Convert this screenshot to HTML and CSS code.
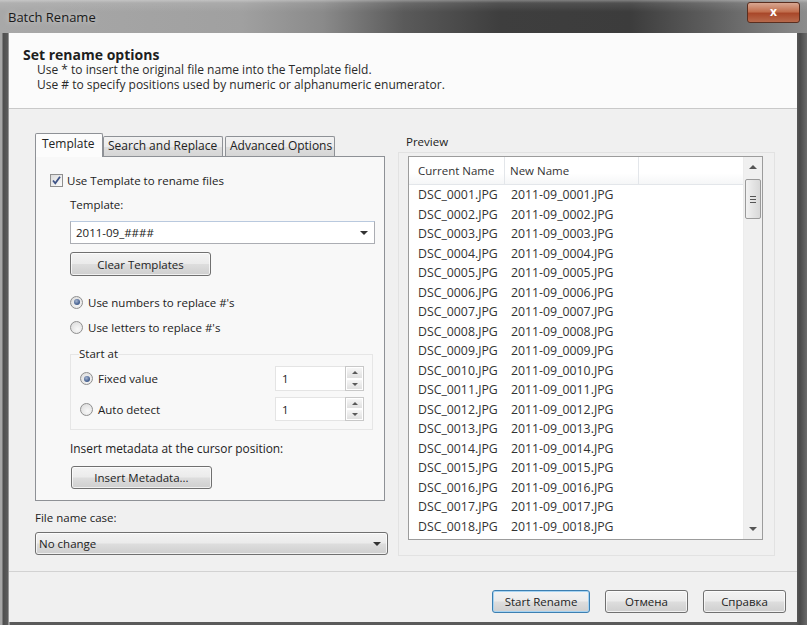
FILE: index.html
```html
<!DOCTYPE html>
<html>
<head>
<meta charset="utf-8">
<title>Batch Rename</title>
<link rel="stylesheet" href="styles.css">
</head>
<body>
<div class="window">
  <div class="titlebar">
    <span class="title">Batch Rename</span>
    <div class="close">x</div>
  </div>
  <div class="client">
    <div class="header">
      <div class="h-title">Set rename options</div>
      <div class="h-line">Use * to insert the original file name into the Template field.</div>
      <div class="h-line">Use # to specify positions used by numeric or alphanumeric enumerator.</div>
    </div>
    <div class="body">
      <div class="left">
        <div class="tabs">
          <div class="tab active">Template</div>
          <div class="tab">Search and Replace</div>
          <div class="tab">Advanced Options</div>
        </div>
        <div class="panel">
          <div class="check-row">
            <span class="checkbox"><svg viewBox="0 0 11 11" width="11" height="11"><path d="M2 5.5 L4.3 8.3 L9 1.8" fill="none" stroke="#3d5286" stroke-width="1.8"/></svg></span>
            <span>Use Template to rename files</span>
          </div>
          <div class="indent">
            <div class="label lbl-template">Template:</div>
            <div class="combo-edit"><span>2011-09_####</span><span class="arrow"></span></div>
            <div class="btn btn-clear">Clear Templates</div>
            <div class="radio-row r1"><span class="radio checked"></span><span>Use numbers to replace #'s</span></div>
            <div class="radio-row r2"><span class="radio"></span><span>Use letters to replace #'s</span></div>
            <fieldset class="startat">
              <legend>Start at</legend>
              <div class="spin-row">
                <div class="radio-row"><span class="radio checked"></span><span>Fixed value</span></div>
                <div class="spin"><div class="spin-input">1</div><div class="spin-btns"><span class="up"></span><span class="down"></span></div></div>
              </div>
              <div class="spin-row second">
                <div class="radio-row"><span class="radio"></span><span>Auto detect</span></div>
                <div class="spin"><div class="spin-input">1</div><div class="spin-btns"><span class="up"></span><span class="down"></span></div></div>
              </div>
            </fieldset>
            <div class="label lbl-insert">Insert metadata at the cursor position:</div>
            <div class="btn btn-insert">Insert Metadata...</div>
          </div>
        </div>
        <div class="label lbl-case">File name case:</div>
        <div class="combo-drop"><span>No change</span><span class="arrow"></span></div>
      </div>
      <div class="preview">
        <div class="label lbl-preview">Preview</div>
        <div class="group">
          <div class="listview">
            <div class="lv-main">
              <div class="lv-header">
                <div class="col c1">Current Name</div>
                <div class="col c2">New Name</div>
                <div class="col c3"></div>
              </div>
              <div class="lv-rows">
                <div class="lv-row"><span>DSC_0001.JPG</span><span>2011-09_0001.JPG</span></div>
                <div class="lv-row"><span>DSC_0002.JPG</span><span>2011-09_0002.JPG</span></div>
                <div class="lv-row"><span>DSC_0003.JPG</span><span>2011-09_0003.JPG</span></div>
                <div class="lv-row"><span>DSC_0004.JPG</span><span>2011-09_0004.JPG</span></div>
                <div class="lv-row"><span>DSC_0005.JPG</span><span>2011-09_0005.JPG</span></div>
                <div class="lv-row"><span>DSC_0006.JPG</span><span>2011-09_0006.JPG</span></div>
                <div class="lv-row"><span>DSC_0007.JPG</span><span>2011-09_0007.JPG</span></div>
                <div class="lv-row"><span>DSC_0008.JPG</span><span>2011-09_0008.JPG</span></div>
                <div class="lv-row"><span>DSC_0009.JPG</span><span>2011-09_0009.JPG</span></div>
                <div class="lv-row"><span>DSC_0010.JPG</span><span>2011-09_0010.JPG</span></div>
                <div class="lv-row"><span>DSC_0011.JPG</span><span>2011-09_0011.JPG</span></div>
                <div class="lv-row"><span>DSC_0012.JPG</span><span>2011-09_0012.JPG</span></div>
                <div class="lv-row"><span>DSC_0013.JPG</span><span>2011-09_0013.JPG</span></div>
                <div class="lv-row"><span>DSC_0014.JPG</span><span>2011-09_0014.JPG</span></div>
                <div class="lv-row"><span>DSC_0015.JPG</span><span>2011-09_0015.JPG</span></div>
                <div class="lv-row"><span>DSC_0016.JPG</span><span>2011-09_0016.JPG</span></div>
                <div class="lv-row"><span>DSC_0017.JPG</span><span>2011-09_0017.JPG</span></div>
                <div class="lv-row"><span>DSC_0018.JPG</span><span>2011-09_0018.JPG</span></div>
              </div>
            </div>
            <div class="scrollbar">
              <div class="sb-arrow"><span class="tri-up"></span></div>
              <div class="sb-thumb"><span></span><span></span><span></span></div>
              <div class="sb-track"></div>
              <div class="sb-arrow"><span class="tri-down"></span></div>
            </div>
          </div>
        </div>
      </div>
    </div>
    <div class="footer">
      <div class="btn btn-default">Start Rename</div>
      <div class="btn btn-foot">Отмена</div>
      <div class="btn btn-foot">Справка</div>
    </div>
  </div>
</div>
</body>
</html>
```

FILE: styles.css
```css
* { box-sizing: border-box; }
html, body { margin: 0; padding: 0; }
body {
  width: 807px;
  height: 625px;
  overflow: hidden;
  background: #5a5a5a;
  font-family: "Open Sans", "Noto Sans", "Liberation Sans", sans-serif;
  font-size: 11.5px;
  color: #222;
}
.window {
  width: 807px;
  height: 625px;
  display: flex;
  flex-direction: column;
  background: linear-gradient(90deg, #a6a6a6 0, #a6a6a6 2px, #4e4e4e 3px, #5c5c5c 8px, #cfcfcf 9px, #5a5a5a 10px, #5a5a5a 796px, #4a4a4a 800px, #6a6a6a 807px);
}
.titlebar {
  height: 33px;
  flex: none;
  display: flex;
  align-items: flex-start;
  justify-content: space-between;
  padding: 0 7px 0 8px;
  background:
    linear-gradient(180deg, rgba(255,255,255,0.35) 0, rgba(255,255,255,0.1) 3px, rgba(0,0,0,0) 12px),
    linear-gradient(90deg, #a8a8a8 0%, #a0a0a0 30%, #8a8a8a 40%, #5a5a5a 50%, #3e3e3e 62%, #3c3c3c 78%, #5e5e5e 88%, #8c8c8c 100%);
}
.title {
  margin-top: 8px;
  font-size: 13px;
  color: #1a1a1a;
  text-shadow: 0 0 6px rgba(255,255,255,0.6);
}
.close {
  margin-top: 2px;
  width: 53px;
  height: 21px;
  border: 1px solid #5a2e1f;
  border-radius: 3px;
  background: linear-gradient(180deg, #d8a792 0%, #c2704f 45%, #a9482a 55%, #b86a4c 100%);
  color: #fff;
  font-weight: bold;
  font-size: 12px;
  line-height: 18px;
  text-align: center;
}
.client {
  flex: 1;
  margin: 0 10px 3px 9px;
  background: #f0f0f0;
  display: flex;
  flex-direction: column;
}
.header {
  height: 76px;
  flex: none;
  background: #fbfbfb;
  border-bottom: 1px solid #c9c9c9;
  padding: 14px 0 0 14px;
}
.h-title { font-weight: bold; font-size: 14px; line-height: 15px; height: 15px; color: #1e1e1e; }
.h-line { padding-left: 14px; color: #2a2a2a; font-size: 12px; line-height: 15px; height: 15px; white-space: nowrap; }
.body {
  flex: 1;
  display: flex;
  gap: 10px;
  padding-left: 26px;
}
.left { width: 353px; display: flex; flex-direction: column; }
.label { line-height: 16px; height: 16px; }
.tabs {
  margin-top: 24px;
  height: 23px;
  display: flex;
  align-items: flex-end;
  position: relative;
  z-index: 1;
  font-size: 12px;
}
.tab {
  height: 20px;
  line-height: 18px;
  padding: 0 4px;
  border: 1px solid #8e9196;
  border-bottom: none;
  background: linear-gradient(180deg, #f2f2f2 0%, #ebebeb 50%, #dedede 51%, #d6d6d6 100%);
  margin-left: 1px;
  border-radius: 2px 2px 0 0;
  color: #222;
  white-space: nowrap;
}
.tab.active {
  height: 24px;
  margin-bottom: -1px;
  margin-left: 0;
  margin-right: -1px;
  background: #fcfcfc;
  padding: 0 6px;
  line-height: 20px;
}
.tab:nth-child(2) { width: 120px; }
.tab:nth-child(3) { width: 110px; margin-left: 2px; }
.tab.active { width: 68px; }
.panel {
  width: 350px;
  height: 345px;
  border: 1px solid #8e9196;
  background: #f8f8f8;
  padding: 15px 0 0 14px;
}
.check-row, .radio-row { display: flex; align-items: center; height: 16px; white-space: nowrap; }
.check-row { gap: 4px; }
.checkbox {
  width: 13px;
  height: 13px;
  border: 1px solid #8f8f8f;
  background: linear-gradient(135deg, #dcdcdc, #fbfbfb);
  display: flex;
  align-items: center;
  justify-content: center;
}
.indent { padding-left: 20px; }
.lbl-template { margin-top: 9px; }
.combo-edit {
  margin-top: 8px;
  width: 305px;
  height: 23px;
  border: 1px solid #abadb3;
  border-top-color: #b9c9de;
  background: #fff;
  display: flex;
  align-items: center;
  justify-content: space-between;
  padding: 0 6px 0 5px;
}
.arrow {
  width: 0;
  height: 0;
  border-left: 4px solid transparent;
  border-right: 4px solid transparent;
  border-top: 4px solid #333;
}
.btn {
  height: 23px;
  border: 1px solid #707070;
  border-radius: 3px;
  background: linear-gradient(180deg, #f3f3f3 0%, #ebebeb 48%, #dddddd 52%, #cfcfcf 100%);
  box-shadow: inset 0 0 0 1px rgba(255,255,255,0.7);
  display: flex;
  align-items: center;
  justify-content: center;
  color: #1e1e1e;
  white-space: nowrap;
}
.btn-clear { margin-top: 8px; width: 141px; height: 24px; }
.radio-row { gap: 5px; }
.radio {
  width: 13px;
  height: 13px;
  border-radius: 50%;
  border: 1px solid #8f8f8f;
  background: radial-gradient(circle at 60% 65%, #f8f8f8 0, #e2e2e2 70%, #cfcfcf 100%);
  display: flex;
  align-items: center;
  justify-content: center;
  flex: none;
}
.radio.checked::after {
  content: "";
  width: 6px;
  height: 6px;
  border-radius: 50%;
  background: radial-gradient(circle at 40% 35%, #a6b5d0 0, #4a6594 60%, #2f4774 100%);
}
.r1 { margin-top: 18px; }
.r2 { margin-top: 9px; }
.startat {
  margin: 11px 0 0 0;
  width: 303px;
  min-width: 0;
  border: 1px solid #e6e6e6;
  padding: 4px 8px 8px 9px;
}
.startat legend {
  padding: 0;
  margin-left: -1px;
  line-height: 16px;
}
.spin-row {
  display: flex;
  align-items: center;
  justify-content: space-between;
  height: 25px;
}
.spin-row.second { margin-top: 6px; height: 24px; }
.spin { display: flex; height: 100%; }
.spin-input {
  width: 70px;
  height: 100%;
  background: #fff;
  border: 1px solid #e4e4e4;
  border-right: none;
  padding: 0 0 0 6px;
  display: flex;
  align-items: center;
}
.spin-btns {
  width: 19px;
  display: flex;
  flex-direction: column;
  border: 1px solid #c8c8c8;
  background: #eaeaea;
}
.spin-btns span {
  flex: 1;
  display: flex;
  align-items: center;
  justify-content: center;
  background: linear-gradient(180deg, #f6f6f6, #e0e0e0);
  border: 1px solid #fff;
}
.spin-btns .up::after {
  content: "";
  border-left: 3px solid transparent;
  border-right: 3px solid transparent;
  border-bottom: 3px solid #5a5a5a;
}
.spin-btns .down::after {
  content: "";
  border-left: 3px solid transparent;
  border-right: 3px solid transparent;
  border-top: 3px solid #5a5a5a;
}
.lbl-insert { margin-top: 10px; font-size: 11.9px; white-space: nowrap; }
.btn-insert { margin: 10px 0 0 1px; width: 141px; }
.lbl-case { margin-top: 9px; }
.combo-drop {
  margin-top: 6px;
  width: 353px;
  height: 23px;
  border: 1px solid #707070;
  border-radius: 3px;
  background: linear-gradient(180deg, #f3f3f3 0%, #ebebeb 48%, #dddddd 52%, #cfcfcf 100%);
  box-shadow: inset 0 0 0 1px rgba(255,255,255,0.7);
  display: flex;
  align-items: center;
  justify-content: space-between;
  padding: 0 6px 0 3px;
}
.preview { width: 377px; display: flex; flex-direction: column; }
.lbl-preview { margin-top: 25px; padding-left: 8px; }
.group {
  margin-top: 2px;
  height: 404px;
  border: 1px solid #e2e2e2;
  padding: 3px 11px 0 9px;
}
.listview {
  height: 384px;
  border: 1px solid #9c9c9c;
  background: #fff;
  display: flex;
  overflow: hidden;
}
.lv-main { flex: 1; display: flex; flex-direction: column; min-width: 0; }
.lv-header {
  height: 28px;
  flex: none;
  display: grid;
  grid-template-columns: 96px 134px 1fr;
  border-bottom: 1px solid #e3e6ea;
  background: linear-gradient(180deg, #ffffff 0%, #ffffff 60%, #f5f6f7 100%);
}
.col {
  display: flex;
  align-items: center;
  border-right: 1px solid #e3e6ea;
  color: #333;
}
.c1 { padding-left: 9px; }
.c2 { padding-left: 5px; }
.c3 { border-right: none; }
.lv-rows { flex: 1; overflow: hidden; font-size: 12.3px; }
.lv-row {
  height: 19.5px;
  display: grid;
  grid-template-columns: 96px 134px;
  align-items: center;
  color: #333;
  white-space: nowrap;
}
.lv-row span:first-child { padding-left: 9px; }
.lv-row span:last-child { padding-left: 6px; }
.scrollbar {
  width: 19px;
  flex: none;
  display: flex;
  flex-direction: column;
  background: #f0f0f0;
  border-left: 1px solid #ececec;
}
.sb-arrow {
  height: 20px;
  display: flex;
  align-items: center;
  justify-content: center;
}
.tri-up {
  border-left: 4px solid transparent;
  border-right: 4px solid transparent;
  border-bottom: 4px solid #555;
}
.tri-down {
  border-left: 4px solid transparent;
  border-right: 4px solid transparent;
  border-top: 4px solid #555;
}
.sb-thumb {
  margin: 2px 1px 0 1px;
  height: 40px;
  border: 1px solid #9a9a9a;
  border-radius: 2px;
  background: linear-gradient(90deg, #f2f2f2, #e4e4e4 50%, #d8d8d8);
  display: flex;
  flex-direction: column;
  align-items: center;
  justify-content: center;
  gap: 2px;
}
.sb-thumb span { width: 6px; height: 1px; background: #555; }
.sb-track { flex: 1; }
.footer {
  height: 51px;
  flex: none;
  border-top: 1px solid #d2d2d2;
  display: flex;
  justify-content: flex-end;
  align-items: flex-start;
  gap: 15px;
  padding: 18px 11px 0 0;
}
.btn-default {
  width: 98px;
  border-color: #3c7fb1;
  box-shadow: inset 0 0 0 1px #a6d3f2;
}
.btn-foot { width: 83px; }
```
